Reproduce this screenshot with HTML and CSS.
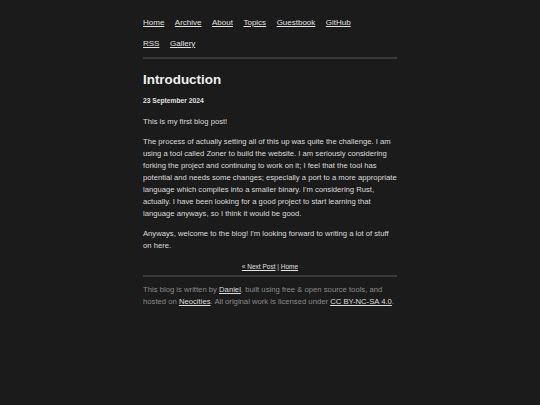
FILE: index.html
```html
<!DOCTYPE html>
<html lang="en">
<head>
<meta charset="utf-8">
<title>Introduction</title>
<link rel="stylesheet" href="styles.css">
</head>
<body>
<div class="wrap">
  <nav class="site-nav">
    <a href="#">Home</a><a href="#">Archive</a><a href="#">About</a><a href="#">Topics</a><a href="#">Guestbook</a><a href="#">GitHub</a><br>
    <a href="#">RSS</a><a href="#">Gallery</a>
  </nav>
  <hr class="rule rule-top">
  <article class="post">
    <h1 class="post-title">Introduction</h1>
    <div class="post-date">23 September 2024</div>
    <p class="first">This is my first blog post!</p>
    <p>The process of actually setting all of this up was quite the challenge. I am using a tool called Zoner to build the website. I am seriously considering forking the project and continuing to work on it; I feel that the tool has potential and needs some changes; especially a port to a more appropriate language which compiles into a smaller binary. I'm considering Rust, actually. I have been looking for a good project to start learning that language anyways, so I think it would be good.</p>
    <p>Anyways, welcome to the blog! I'm looking forward to writing a lot of stuff on here.</p>
    <div class="post-nav"><a href="#">« Next Post</a> | <a href="#">Home</a></div>
  </article>
  <hr class="rule rule-bottom">
  <footer class="site-footer">
    This blog is written by <a href="#">Daniel</a>, built using free &amp; open source tools, and hosted on <a href="#">Neocities</a>. All original work is licensed under <a href="#">CC BY-NC-SA 4.0</a>.
  </footer>
</div>
</body>
</html>
```

FILE: styles.css
```css
html, body {
  margin: 0;
  padding: 0;
  background: #1b1b1b;
}
body {
  font-family: "Liberation Sans", Arial, Helvetica, sans-serif;
  color: #dcdcdc;
  font-size: 7.7px;
}
.wrap {
  width: 254px;
  margin: 0 auto;
  padding-top: 12px;
}
a {
  color: #e0e0e0;
  text-decoration: underline;
}
.site-nav {
  font-size: 8px;
  line-height: 21px;
}
.site-nav a {
  margin-right: 10.5px;
}
.rule {
  border: 0;
  height: 2px;
  background: #3a3a3a;
  margin: 0;
}
.rule-top {
  margin-top: 3px;
}
.post-title {
  font-size: 13.4px;
  line-height: 16px;
  font-weight: bold;
  color: #f0f0f0;
  margin: 12.5px 0 0;
}
.post-date {
  font-size: 6.7px;
  font-weight: bold;
  line-height: 10px;
  margin-top: 8.5px;
  color: #e0e0e0;
}
.post p {
  font-size: 7.66px;
  line-height: 12px;
  margin: 8px 0 0;
}
.post p.first {
  margin-top: 9.7px;
}
.post-nav {
  text-align: center;
  font-size: 6.5px;
  line-height: 10px;
  margin-top: 10px;
}
.rule-bottom {
  margin-top: 3.3px;
}
.site-footer {
  margin-top: 6.7px;
  line-height: 12px;
  color: #8a8a8a;
}
.site-footer a {
  color: #dcdcdc;
}
```
